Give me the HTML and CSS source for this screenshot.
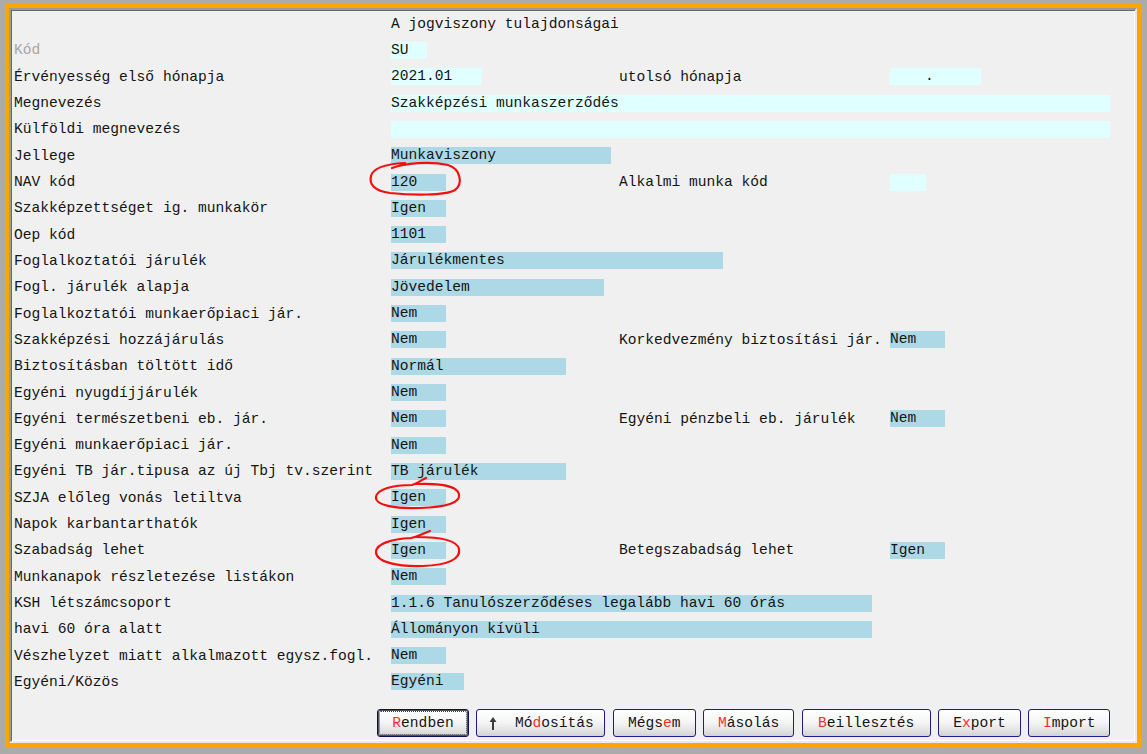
FILE: index.html
```html
<!DOCTYPE html>
<html lang="hu">
<head>
<meta charset="utf-8">
<title>A jogviszony tulajdonságai</title>
<link rel="stylesheet" href="styles.css">
</head>
<body>
<div class="frame">
  <div class="panel">
    <div class="row"><span class="lbl"></span><span class="cell"><span class="f w300">A jogviszony tulajdonságai</span></span></div>
    <div class="row"><span class="lbl dis">Kód</span><span class="cell"><span class="f c w36">SU</span></span></div>
    <div class="row"><span class="lbl">Érvényesség első hónapja</span><span class="cell"><span class="f c w91">2021.01</span></span><span class="lbl2">utolsó hónapja</span><span class="f c w91">    .</span></div>
    <div class="row"><span class="lbl">Megnevezés</span><span class="cell"><span class="f c w719">Szakképzési munkaszerződés</span></span></div>
    <div class="row"><span class="lbl">Külföldi megnevezés</span><span class="cell"><span class="f c w719"></span></span></div>
    <div class="row"><span class="lbl">Jellege</span><span class="cell"><span class="f b w220">Munkaviszony</span></span></div>
    <div class="row"><span class="lbl">NAV kód</span><span class="cell"><span class="f b w55">120</span></span><span class="lbl2">Alkalmi munka kód</span><span class="f c w36"></span></div>
    <div class="row"><span class="lbl">Szakképzettséget ig. munkakör</span><span class="cell"><span class="f b w55">Igen</span></span></div>
    <div class="row"><span class="lbl">Oep kód</span><span class="cell"><span class="f b w55">1101</span></span></div>
    <div class="row"><span class="lbl">Foglalkoztatói járulék</span><span class="cell"><span class="f b w332">Járulékmentes</span></span></div>
    <div class="row"><span class="lbl">Fogl. járulék alapja</span><span class="cell"><span class="f b w213">Jövedelem</span></span></div>
    <div class="row"><span class="lbl">Foglalkoztatói munkaerőpiaci jár.</span><span class="cell"><span class="f b w55">Nem</span></span></div>
    <div class="row"><span class="lbl">Szakképzési hozzájárulás</span><span class="cell"><span class="f b w55">Nem</span></span><span class="lbl2">Korkedvezmény biztosítási jár.</span><span class="f b w55">Nem</span></div>
    <div class="row"><span class="lbl">Biztosításban töltött idő</span><span class="cell"><span class="f b w175">Normál</span></span></div>
    <div class="row"><span class="lbl">Egyéni nyugdíjjárulék</span><span class="cell"><span class="f b w55">Nem</span></span></div>
    <div class="row"><span class="lbl">Egyéni természetbeni eb. jár.</span><span class="cell"><span class="f b w55">Nem</span></span><span class="lbl2">Egyéni pénzbeli eb. járulék</span><span class="f b w55">Nem</span></div>
    <div class="row"><span class="lbl">Egyéni munkaerőpiaci jár.</span><span class="cell"><span class="f b w55">Nem</span></span></div>
    <div class="row"><span class="lbl">Egyéni TB jár.tipusa az új Tbj tv.szerint</span><span class="cell"><span class="f b w175">TB járulék</span></span></div>
    <div class="row"><span class="lbl">SZJA előleg vonás letiltva</span><span class="cell"><span class="f b w55">Igen</span></span></div>
    <div class="row"><span class="lbl">Napok karbantarthatók</span><span class="cell"><span class="f b w55">Igen</span></span></div>
    <div class="row"><span class="lbl">Szabadság lehet</span><span class="cell"><span class="f b w55">Igen</span></span><span class="lbl2">Betegszabadság lehet</span><span class="f b w55">Igen</span></div>
    <div class="row"><span class="lbl">Munkanapok részletezése listákon</span><span class="cell"><span class="f b w55">Nem</span></span></div>
    <div class="row"><span class="lbl">KSH létszámcsoport</span><span class="cell"><span class="f b w481">1.1.6 Tanulószerződéses legalább havi 60 órás</span></span></div>
    <div class="row"><span class="lbl">havi 60 óra alatt</span><span class="cell"><span class="f b w481">Állományon kívüli</span></span></div>
    <div class="row"><span class="lbl">Vészhelyzet miatt alkalmazott egysz.fogl.</span><span class="cell"><span class="f b w55">Nem</span></span></div>
    <div class="row"><span class="lbl">Egyéni/Közös</span><span class="cell"><span class="f b w73">Egyéni</span></span></div>

    <div class="buttons">
      <button class="btn focus w92"><span class="k">R</span>endben</button>
      <button class="btn w129"><svg class="arrow" width="10" height="15" viewBox="0 0 10 15"><path d="M5 1 L1.5 6 H4 V14 H6 V6 H8.5 Z" fill="#3c3c3c"/></svg><span class="gap"></span>Mó<span class="k">d</span>osítás</button>
      <button class="btn w83">Mégs<span class="k">e</span>m</button>
      <button class="btn w91b"><span class="k">M</span>ásolás</button>
      <button class="btn w129"><span class="k">B</span>eillesztés</button>
      <button class="btn w83">E<span class="k">x</span>port</button>
      <button class="btn w82"><span class="k">I</span>mport</button>
    </div>
  </div>
</div>
<svg class="marks" width="1147" height="754" viewBox="0 0 1147 754">
  <path d="M392 168 C 405 163, 430 161, 448 165 C 461 169, 463 184, 455 190 C 445 196, 410 195, 390 193 C 374 191, 369 184, 371 176 C 373 168, 385 164, 405 163" />
  <path d="M426 478 C 420 481, 416 484, 412 485 C 393 485, 377 489, 376 497 C 375 505, 395 509, 420 508 C 446 507, 461 503, 459 494 C 457 486, 440 483, 416 484" />
  <path d="M430 531 C 422 534, 416 537, 411 538 C 391 539, 376 544, 376 552 C 376 562, 398 567, 423 566 C 448 565, 461 559, 459 549 C 457 540, 440 537, 416 537" />
</svg>
</body>
</html>
```
FILE: styles.css
```css
html, body {
  margin: 0;
  padding: 0;
}
body {
  background: #ababab;
  font-family: "Liberation Mono", "Courier New", monospace;
  font-size: 14.6px;
  color: #141414;
  width: 1147px;
  height: 754px;
  overflow: hidden;
}
.frame {
  margin: 4px 0 0 5px;
  width: 1136px;
  height: 743px;
  box-sizing: border-box;
  border: 4px solid #ffa500;
}
.panel {
  height: 100%;
  box-sizing: border-box;
  border: 2px solid;
  border-color: #9a9a9a #e8e8e8 #e8e8e8 #9a9a9a;
  box-shadow: inset 1px 1px 0 #6a6a6a, inset -1px -1px 0 #ffffff;
  background: #f0f0f0;
  padding: 1px 0 0 3px;
}
.row {
  display: flex;
  align-items: center;
  height: 26.32px;
}
.lbl {
  flex: none;
  width: 377px;
  white-space: pre;
}
.lbl.dis {
  color: #a6a6a6;
}
.cell {
  flex: none;
  width: 228px;
}
.lbl2 {
  flex: none;
  width: 271px;
  white-space: pre;
}
.f {
  display: block;
  flex: none;
  height: 17px;
  line-height: 17px;
  white-space: pre;
}
.f.c { background: #e0ffff; }
.f.b { background: #add8e6; }
.w36 { width: 36px; }
.w55 { width: 55px; }
.w73 { width: 73px; }
.w91 { width: 91px; }
.w175 { width: 175px; }
.w213 { width: 213px; }
.w220 { width: 220px; }
.w300 { width: 300px; }
.w332 { width: 332px; }
.w481 { width: 481px; }
.w719 { width: 719px; }

.buttons {
  display: flex;
  gap: 7.4px;
  margin: 14px 0 0 363px;
}
.btn {
  flex: none;
  height: 28px;
  box-sizing: border-box;
  border: 1px solid #1c1c8a;
  border-radius: 3px;
  background: linear-gradient(#ffffff 0%, #f6f6f6 45%, #e2e2e2 80%, #d2d2d2 100%);
  font: inherit;
  color: #141414;
  display: flex;
  align-items: center;
  justify-content: center;
  padding: 0;
  white-space: pre;
  position: relative;
}
.btn.focus {
  border-color: #101050;
  box-shadow: inset 0 0 0 1px #505060;
}
.btn.focus::after {
  content: "";
  position: absolute;
  inset: 1px;
  border: 1px dotted #404040;
  border-radius: 2px;
}
.btn .k { color: #ff2b2b; }
.btn .arrow { flex: none; }
.btn .gap { display: inline-block; width: 17px; }
.w92 { width: 92px; }
.w129 { width: 129px; }
.w83 { width: 83px; }
.w91b { width: 91px; }
.w82 { width: 82px; }

.marks {
  position: absolute;
  left: 0;
  top: 0;
  pointer-events: none;
}
.marks path {
  fill: none;
  stroke: #f01010;
  stroke-width: 2.2;
  stroke-linecap: round;
}
```
